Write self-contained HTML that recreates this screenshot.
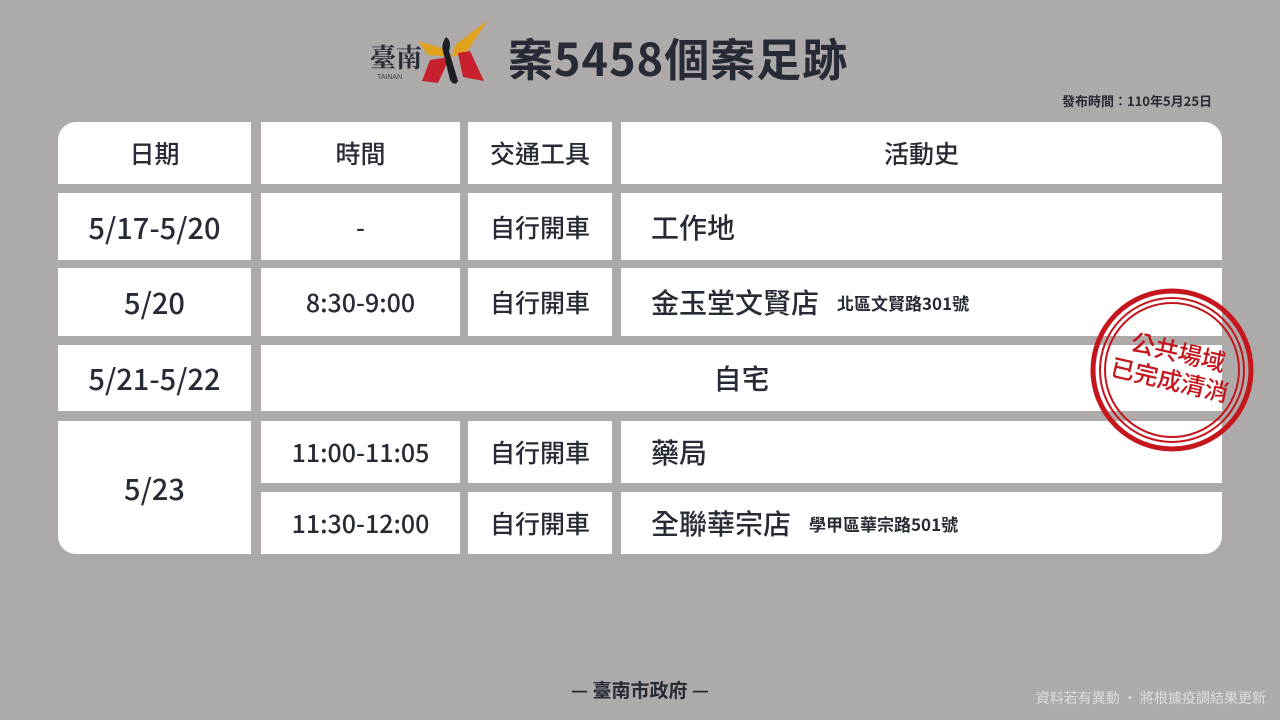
<!DOCTYPE html>
<html><head><meta charset="utf-8"><style>
body{margin:0;width:1280px;height:720px;background:#adaaa9;position:relative;overflow:hidden;font-family:"Noto Sans CJK TC","Liberation Sans",sans-serif;color:#262b36}
.c{position:absolute;background:#fff;display:flex;align-items:center;justify-content:center;font-size:25px;font-weight:500}
.l{justify-content:flex-start;padding-left:30px;box-sizing:border-box}
.s{font-size:17px;margin-left:18px;font-weight:700}
</style></head><body>
<svg style="position:absolute;left:360px;top:15px" width="140" height="80" viewBox="0 0 140 80">
<text x="10" y="52" font-size="26" font-family="Noto Serif CJK SC,serif" font-weight="700" fill="#262b36">臺南</text>
<text x="17" y="64" font-size="7" fill="#444" font-family="Liberation Sans">TAINAN</text>
<path d="M58 26 L85 34 L92 42 L68 40Z" fill="#e0a21d"/>
<path d="M128 5 L95 30 L92 42 L106 38Z" fill="#e0a21d"/>
<path d="M70 45 L90 42 L78 68 L62 66Z" fill="#c8202f"/>
<path d="M98 38 L110 36 L124 66 L103 62Z" fill="#c8202f"/>
<path d="M86 22 Q92 26 89 36 L98 66 Q95 72 90 65 L84 40 Q80 30 86 22Z" fill="#1e1e22"/>
</svg>
<div style="position:absolute;left:508px;top:26px;font-size:45px;font-weight:700;color:#262b36;line-height:62px;letter-spacing:1px">案5458個案足跡</div>
<div style="position:absolute;right:68px;top:91px;font-size:13px;font-weight:700">發布時間：110年5月25日</div>

<div class="c" style="left:58px;top:122px;width:193px;height:62px;border-top-left-radius:18px">日期</div>
<div class="c" style="left:261px;top:122px;width:199px;height:62px">時間</div>
<div class="c" style="left:468px;top:122px;width:144px;height:62px">交通工具</div>
<div class="c" style="left:621px;top:122px;width:601px;height:62px;border-top-right-radius:18px">活動史</div>

<div class="c" style="left:58px;top:193px;width:193px;height:67px;font-size:29px">5/17-5/20</div>
<div class="c" style="left:261px;top:193px;width:199px;height:67px">-</div>
<div class="c" style="left:468px;top:193px;width:144px;height:67px">自行開車</div>
<div class="c l" style="left:621px;top:193px;width:601px;height:67px;font-size:28px">工作地</div>

<div class="c" style="left:58px;top:268px;width:193px;height:68px;font-size:29px">5/20</div>
<div class="c" style="left:261px;top:268px;width:199px;height:68px">8:30-9:00</div>
<div class="c" style="left:468px;top:268px;width:144px;height:68px">自行開車</div>
<div class="c l" style="left:621px;top:268px;width:601px;height:68px;font-size:28px">金玉堂文賢店<span class="s">北區文賢路301號</span></div>

<div class="c" style="left:58px;top:345px;width:193px;height:66px;font-size:29px">5/21-5/22</div>
<div class="c" style="left:261px;top:345px;width:961px;height:66px;font-size:28px">自宅</div>

<div class="c" style="left:58px;top:421px;width:193px;height:133px;font-size:29px;border-bottom-left-radius:18px">5/23</div>
<div class="c" style="left:261px;top:421px;width:199px;height:62px">11:00-11:05</div>
<div class="c" style="left:468px;top:421px;width:144px;height:62px">自行開車</div>
<div class="c l" style="left:621px;top:421px;width:601px;height:62px;font-size:28px">藥局</div>
<div class="c" style="left:261px;top:492px;width:199px;height:62px">11:30-12:00</div>
<div class="c" style="left:468px;top:492px;width:144px;height:62px">自行開車</div>
<div class="c l" style="left:621px;top:492px;width:601px;height:62px;font-size:28px;border-bottom-right-radius:18px">全聯華宗店<span class="s">學甲區華宗路501號</span></div>

<svg style="position:absolute;left:1088px;top:286px" width="168" height="168" viewBox="0 0 168 168">
<circle cx="84" cy="84" r="79" fill="none" stroke="#c4161c" stroke-width="5"/>
<circle cx="84" cy="84" r="72" fill="none" stroke="#c4161c" stroke-width="2"/>
<circle cx="84" cy="84" r="67" fill="none" stroke="#c4161c" stroke-width="2"/>
<g transform="rotate(13 84 84)" fill="#c4161c" font-weight="500" font-family="Noto Sans CJK TC,sans-serif">
<text x="86" y="74" font-size="24" text-anchor="middle">公共場域</text>
<text x="84" y="103" font-size="24" text-anchor="middle">已完成清消</text>
</g>
</svg>

<div style="position:absolute;left:0;width:1280px;top:676px;text-align:center;font-size:19px;font-weight:700">— 臺南市政府 —</div>
<div style="position:absolute;right:14px;top:688px;font-size:14px;color:#ddd">資料若有異動 · 將根據疫調結果更新</div>
</body></html>
